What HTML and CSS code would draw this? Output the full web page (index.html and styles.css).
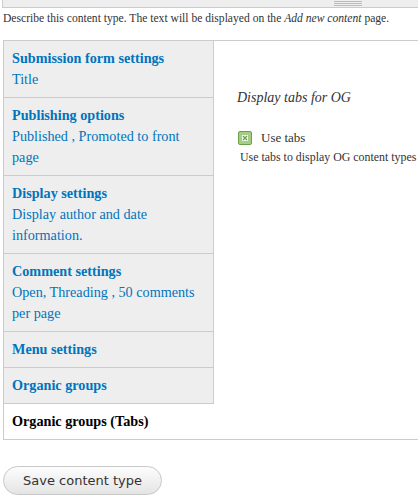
FILE: index.html
```html
<!DOCTYPE html>
<html>
<head>
<meta charset="utf-8">
<link rel="stylesheet" href="styles.css">
</head>
<body>
<div class="page">
  <div class="textarea-bottom"><span class="grippie"></span></div>
  <div class="description">Describe this content type. The text will be displayed on the <em>Add new content</em> page.</div>

  <div class="vtabs">
    <ul class="vtabs-list">
      <li class="vtab"><a><strong>Submission form settings</strong><span class="summary">Title</span></a></li>
      <li class="vtab"><a><strong>Publishing options</strong><span class="summary">Published , Promoted to front page</span></a></li>
      <li class="vtab"><a><strong>Display settings</strong><span class="summary">Display author and date information.</span></a></li>
      <li class="vtab"><a><strong>Comment settings</strong><span class="summary">Open, Threading , 50 comments per page</span></a></li>
      <li class="vtab"><a><strong>Menu settings</strong></a></li>
      <li class="vtab"><a><strong>Organic groups</strong></a></li>
      <li class="vtab selected"><a><strong>Organic groups (Tabs)</strong></a></li>
    </ul>
    <div class="vtabs-pane">
      <div class="legend">Display tabs for OG</div>
      <div class="form-item">
        <span class="checkbox">
          <svg width="14" height="14" viewBox="0 0 14 14">
            <rect x="0.5" y="0.5" width="13" height="13" rx="1.5" fill="#a3cf84" stroke="#6c9e4c"/>
            <rect x="4" y="4" width="6" height="6" fill="#f4f8ee"/>
            <path d="M5 5 L9 9 M9 5 L5 9" stroke="#6f9a55" stroke-width="1.2"/>
          </svg>
        </span>
        <label>Use tabs</label>
      </div>
      <div class="field-desc">Use tabs to display OG content types</div>
    </div>
  </div>

  <div class="actions">
    <button class="button">Save content type</button>
  </div>
</div>
</body>
</html>
```

FILE: styles.css
```css
html, body {
  margin: 0;
  padding: 0;
  background: #fff;
  overflow: hidden;
}
body {
  font-family: "Liberation Serif", "Times New Roman", serif;
  color: #333;
}
.page {
  width: 418px;
}
.textarea-bottom {
  margin-left: 2px;
  height: 7px;
  background: #eee;
  border-left: 1px solid #ccc;
  border-bottom: 1px solid #ccc;
  position: relative;
}
.grippie {
  position: absolute;
  left: 331px;
  top: 1px;
  width: 28px;
  height: 5px;
  border-top: 1px solid #bbb;
  border-bottom: 1px solid #bbb;
  background: linear-gradient(#eee 0 1px, #bbb 1px 2px, #eee 2px);
  box-sizing: border-box;
}
.description {
  margin: 4px 0 0 3px;
  font-size: 11.6px;
  line-height: 14px;
  color: #333;
  white-space: nowrap;
}
.vtabs {
  display: flex;
  box-sizing: border-box;
  margin: 14px 0 0 3px;
  width: 416px;
  border: 1px solid #ccc;
}
.vtabs-list {
  list-style: none;
  margin: 0;
  padding: 0;
  width: 210px;
  flex: none;
}
.vtab {
  box-sizing: border-box;
  background: #eee;
  border-right: 1px solid #ccc;
  border-bottom: 1px solid #ccc;
  padding: 7px 8px;
  font-size: 14.2px;
  line-height: 21px;
}
.vtab a {
  display: block;
  color: #0074bd;
}
.vtab strong {
  display: block;
  font-weight: bold;
}
.vtab .summary {
  display: block;
}
.vtab.selected {
  background: #fff;
  border-right-color: #fff;
  border-bottom: none;
}
.vtab.selected a {
  color: #000;
}
.vtabs-pane {
  flex: 1;
  min-width: 0;
  padding: 48px 0 0 23px;
}
.legend {
  font-style: italic;
  font-size: 14px;
  line-height: 18px;
}
.form-item {
  display: flex;
  align-items: center;
  margin: 23px 0 0 1px;
  height: 16px;
}
.checkbox {
  display: flex;
  width: 14px;
  height: 14px;
}
.form-item label {
  margin-left: 9px;
  font-size: 13px;
  line-height: 16px;
}
.field-desc {
  margin: 3px 0 0 3px;
  font-size: 11.9px;
  line-height: 16px;
  white-space: nowrap;
}
.actions {
  margin: 26px 0 0 3px;
}
.button {
  font-family: "DejaVu Sans", "Liberation Sans", sans-serif;
  font-size: 13px;
  color: #333;
  height: 29px;
  padding: 0 19px;
  border: 1px solid #c8c8c8;
  border-radius: 15px;
  background: linear-gradient(#fdfdfd, #e4e4e4);
  cursor: pointer;
}
```
